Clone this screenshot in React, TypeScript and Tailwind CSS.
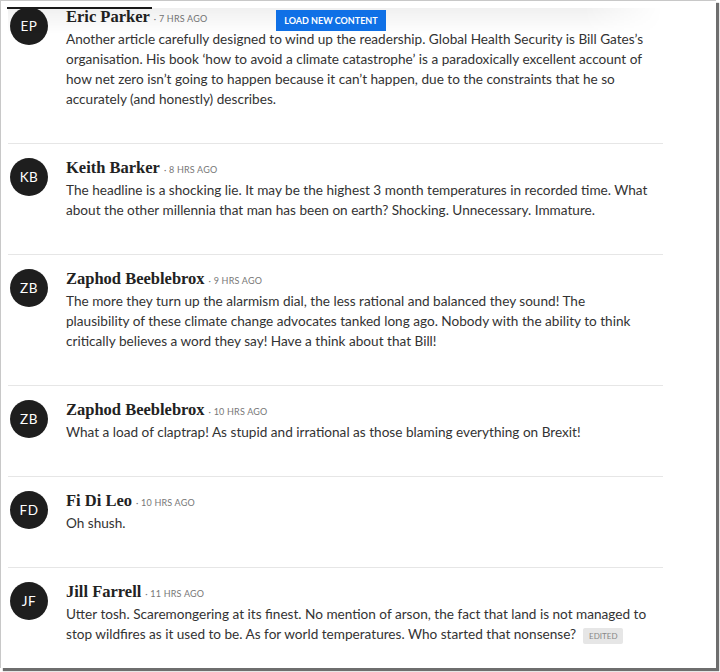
import { FC } from "react";

type Comment = {
  initials: string;
  name: string;
  time: string;
  body: string;
  edited?: boolean;
};

const comments: Comment[] = [
  {
    initials: "EP",
    name: "Eric Parker",
    time: "7 HRS AGO",
    body: "Another article carefully designed to wind up the readership. Global Health Security is Bill Gates’s organisation. His book ‘how to avoid a climate catastrophe’ is a paradoxically excellent account of how net zero isn’t going to happen because it can’t happen, due to the constraints that he so accurately (and honestly) describes.",
  },
  {
    initials: "KB",
    name: "Keith Barker",
    time: "8 HRS AGO",
    body: "The headline is a shocking lie. It may be the highest 3 month temperatures in recorded time. What about the other millennia that man has been on earth? Shocking. Unnecessary. Immature.",
  },
  {
    initials: "ZB",
    name: "Zaphod Beeblebrox",
    time: "9 HRS AGO",
    body: "The more they turn up the alarmism dial, the less rational and balanced they sound! The plausibility of these climate change advocates tanked long ago. Nobody with the ability to think critically believes a word they say! Have a think about that Bill!",
  },
  {
    initials: "ZB",
    name: "Zaphod Beeblebrox",
    time: "10 HRS AGO",
    body: "What a load of claptrap! As stupid and irrational as those blaming everything on Brexit!",
  },
  {
    initials: "FD",
    name: "Fi Di Leo",
    time: "10 HRS AGO",
    body: "Oh shush.",
  },
  {
    initials: "JF",
    name: "Jill Farrell",
    time: "11 HRS AGO",
    body: "Utter tosh. Scaremongering at its finest. No mention of arson, the fact that land is not managed to stop wildfires as it used to be. As for world temperatures. Who started that nonsense?",
    edited: true,
  },
];

const CommentRow: FC<{ c: Comment }> = ({ c }) => {
  return (
    <div className="flex gap-[18px] border-t border-[#e6e6e6] pt-[11px] pb-[34px] pl-[2px]">
      <div className="mt-[3px] w-[38px] h-[38px] shrink-0 rounded-full bg-[#1e1e1e] flex items-center justify-center text-white text-[13.5px] font-['Lato',sans-serif] tracking-[0.5px]">
        {c.initials}
      </div>
      <div className="flex-1 pr-[12px]">
        <div className="flex items-baseline h-[25px] leading-[25px]">
          <span className="font-['Liberation_Serif',serif] font-bold text-[16.5px] text-[#222]">
            {c.name}
          </span>
          <span className="ml-[4px] font-['Lato',sans-serif] text-[9px] tracking-[0.2px] text-[#777]">
            · {c.time}
          </span>
        </div>
        <p className="font-['Lato',sans-serif] text-[13.6px] leading-[20px] text-[#333]">
          {c.body}
          {c.edited && (
            <span className="ml-[7px] inline-block align-middle rounded-[2px] bg-[#e6e6e6] px-[6px] h-[16px] leading-[16px] text-[8px] text-[#888]">
              EDITED
            </span>
          )}
        </p>
      </div>
    </div>
  );
};

const App: FC = () => {
  return (
    <div className="w-[720px] h-[672px] bg-white overflow-hidden">
      <div className="relative w-[716px] h-[668px] bg-white border-l border-t border-[#c8c8c8] shadow-[3px_3px_1px_#6e6e6e] overflow-hidden">
        <div className="ml-[7px] mt-[-9px] w-[655px]">
          {comments.map((c, i) => (
            <CommentRow key={i} c={c} />
          ))}
        </div>

        {/* sticky header bits sitting over the list */}
        <div className="absolute left-[7px] top-[7px] w-[655px] h-[26px] bg-gradient-to-b from-black/[0.06] to-transparent [mask-image:linear-gradient(to_right,black_88%,transparent)]" />
        <div className="absolute left-[6px] top-[6px] w-[145px] h-[2px] bg-[#1a1a1a]" />
        <button className="absolute left-[275px] top-[9px] w-[110px] h-[21px] bg-[#0f70e6] text-white font-['Lato',sans-serif] font-bold text-[9px]">
          LOAD NEW CONTENT
        </button>
      </div>
    </div>
  );
};

export default App;
